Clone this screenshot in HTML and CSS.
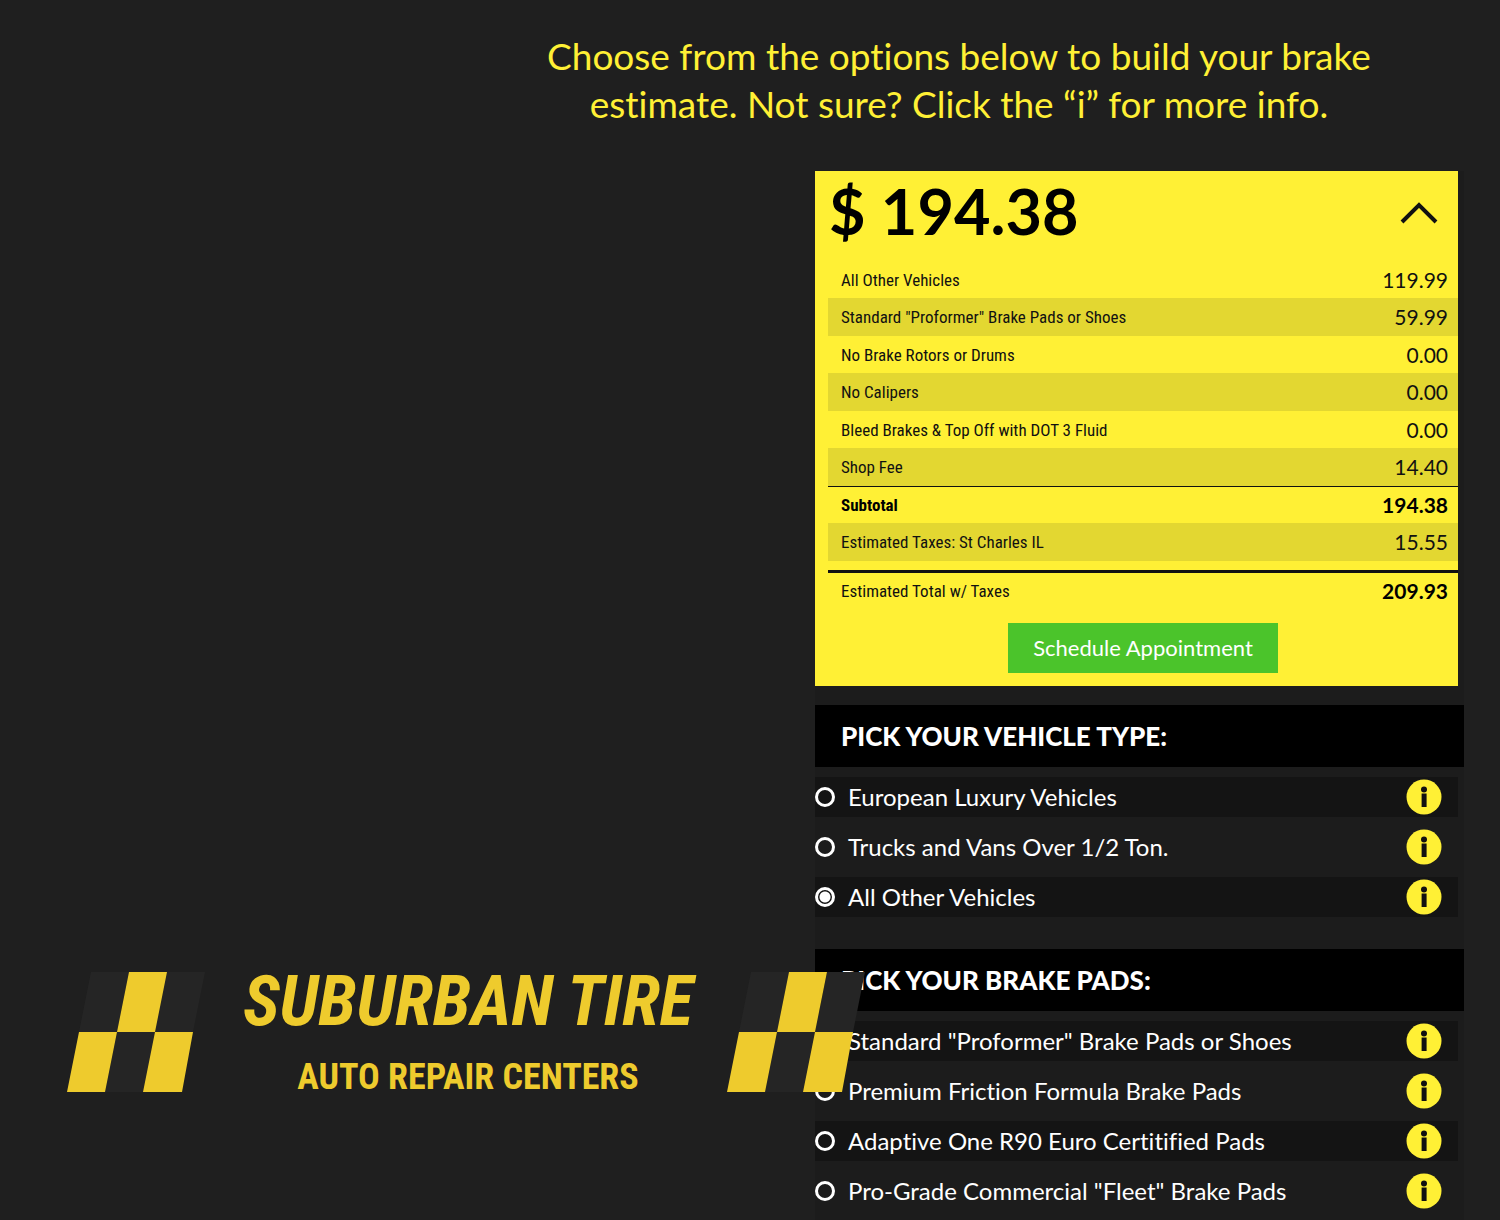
FILE: index.html
```html
<!DOCTYPE html>
<html lang="en">
<head>
<meta charset="utf-8">
<meta name="viewport" content="width=device-width, initial-scale=1">
<title>Brake Estimate | Suburban Tire Auto Repair Centers</title>
<link rel="stylesheet" href="styles.css">
</head>
<body>
<svg class="sprite" aria-hidden="true">
  <symbol id="info" viewBox="0 0 36 36">
    <circle cx="18" cy="18" r="17.5" fill="#fff035"/>
    <circle cx="18" cy="10.500" r="3" fill="#111"/>
    <path d="M15.600 14.500h5v13.500h-5z" fill="#111"/>
  </symbol>
  <symbol id="flag" viewBox="0 0 138 122">
    <path d="M24 1H62L50 61H12ZM100 1H138L126 61H88ZM50 61H88L76 121H38Z" fill="#252525"/>
    <path d="M62 1H100L88 61H50ZM12 61H50L38 121H0ZM88 61H126L115 121H76Z" fill="#eecb2d"/>
  </symbol>
</svg>

<main class="page">
  <h1 class="intro">Choose from the options below to build your brake<br>estimate. Not sure? Click the “i” for more info.</h1>

  <div class="builder">
    <section class="estimate" aria-label="Estimate">
      <header class="estimate-head">
        <output class="price">$ 194.38</output>
        <button class="collapse" type="button" aria-label="Hide details">
          <svg width="38" height="22" viewBox="0 0 38 22"><path d="M2 20L19 3L36 20" fill="none" stroke="#111" stroke-width="4"/></svg>
        </button>
      </header>
      <table class="lines">
        <tbody>
          <tr><th scope="row">All Other Vehicles</th><td>119.99</td></tr>
          <tr><th scope="row">Standard "Proformer" Brake Pads or Shoes</th><td>59.99</td></tr>
          <tr><th scope="row">No Brake Rotors or Drums</th><td>0.00</td></tr>
          <tr><th scope="row">No Calipers</th><td>0.00</td></tr>
          <tr><th scope="row">Bleed Brakes &amp; Top Off with DOT 3 Fluid</th><td>0.00</td></tr>
          <tr><th scope="row">Shop Fee</th><td>14.40</td></tr>
          <tr class="subtotal"><th scope="row">Subtotal</th><td>194.38</td></tr>
          <tr><th scope="row">Estimated Taxes: St Charles IL</th><td>15.55</td></tr>
        </tbody>
      </table>
      <table class="lines total">
        <tbody><tr><th scope="row">Estimated Total w/ Taxes</th><td>209.93</td></tr></tbody>
      </table>
      <button class="schedule" type="button">Schedule Appointment</button>
    </section>

    <fieldset class="group">
      <legend>PICK YOUR VEHICLE TYPE:</legend>
      <div class="options">
        <div class="option"><label><input type="radio" name="vehicle">European Luxury Vehicles</label><button class="info" type="button" aria-label="More info"><svg><use href="#info"/></svg></button></div>
        <div class="option"><label><input type="radio" name="vehicle">Trucks and Vans Over 1/2 Ton.</label><button class="info" type="button" aria-label="More info"><svg><use href="#info"/></svg></button></div>
        <div class="option"><label><input type="radio" name="vehicle" checked>All Other Vehicles</label><button class="info" type="button" aria-label="More info"><svg><use href="#info"/></svg></button></div>
      </div>
    </fieldset>

    <fieldset class="group">
      <legend>PICK YOUR BRAKE PADS:</legend>
      <div class="options">
        <div class="option"><label><input type="radio" name="pads" checked>Standard "Proformer" Brake Pads or Shoes</label><button class="info" type="button" aria-label="More info"><svg><use href="#info"/></svg></button></div>
        <div class="option"><label><input type="radio" name="pads">Premium Friction Formula Brake Pads</label><button class="info" type="button" aria-label="More info"><svg><use href="#info"/></svg></button></div>
        <div class="option"><label><input type="radio" name="pads">Adaptive One R90 Euro Certitified Pads</label><button class="info" type="button" aria-label="More info"><svg><use href="#info"/></svg></button></div>
        <div class="option"><label><input type="radio" name="pads">Pro-Grade Commercial "Fleet" Brake Pads</label><button class="info" type="button" aria-label="More info"><svg><use href="#info"/></svg></button></div>
      </div>
    </fieldset>
  </div>

  <div class="brand">
    <svg class="flag"><use href="#flag"/></svg>
    <div class="brand-text">
      <span class="brand-name">SUBURBAN TIRE</span>
      <span class="brand-tag">AUTO REPAIR CENTERS</span>
    </div>
    <svg class="flag"><use href="#flag"/></svg>
  </div>
</main>
</body>
</html>
```
FILE: styles.css
```css
:root {
  --yellow: #fff035;
  --page: #1f1f1f;
  --sans: Lato, "Open Sans", sans-serif;
  --narrow: "Roboto Condensed", "Liberation Sans Narrow", "DejaVu Sans Condensed", sans-serif;
}

* { box-sizing: border-box; }

body {
  margin: 0;
  background: var(--page);
  color: #fff;
  font-family: var(--sans);
  font-variant-ligatures: none;
}

button {
  margin: 0;
  padding: 0;
  border: 0;
  background: none;
  font: inherit;
  color: inherit;
  cursor: pointer;
}

button svg { display: block; }

.sprite { position: absolute; width: 0; height: 0; }

.page {
  position: relative;
  min-height: 100vh;
  padding: 32px 36px 0 0;
}

.intro {
  margin: 0 0 43px;
  padding-left: 31%;
  color: var(--yellow);
  font-size: 37px;
  font-weight: 400;
  line-height: 48px;
  text-align: center;
}

.builder {
  display: flex;
  flex-direction: column;
  gap: 32px;
  width: 44.33%;
  margin-left: auto;
  padding-bottom: 9px;
  background: #1c1c1c;
}

.estimate {
  display: flex;
  flex-direction: column;
  margin: 0 6px -13px 0;
  padding-bottom: 13px;
  background: var(--yellow);
  color: #111;
}

.estimate-head {
  display: flex;
  align-items: center;
  justify-content: space-between;
  height: 90px;
  padding: 0 20px 6px 14px;
}

.price {
  padding-bottom: 4px;
  font-size: 63px;
  font-weight: 700;
  line-height: 80px;
  color: #000;
}

.lines {
  margin-left: 13px;
  border-collapse: collapse;
  line-height: 24px;
}

.lines th,
.lines td {
  height: 37px;
  padding: 0 10px 0 13px;
  font-weight: 400;
}

.lines th {
  font-family: var(--narrow);
  font-size: 17px;
  text-align: left;
}

.lines td {
  font-size: 21px;
  text-align: right;
}

.lines tr:nth-child(even) { background: #e3d731; }
.lines tr:nth-child(even) :is(th, td) { height: 38px; }

.lines .subtotal { border-top: 1px solid #111; }
.lines .subtotal :is(th, td),
.total td { font-weight: 700; color: #000; }

.total {
  margin-top: 9px;
  border-top: 3px solid #111;
}

.schedule {
  align-self: center;
  margin: 14px 0 0 13px;
  padding: 0 25px;
  background: #4bc42b;
  color: #fff;
  font-size: 22px;
  line-height: 50px;
}

.group {
  min-width: 0;
  margin: 0;
  padding: 0;
  border: 0;
}

.group legend {
  width: 100%;
  margin-bottom: 10px;
  padding: 0 26px;
  background: #000;
  font-size: 26px;
  font-weight: 900;
  line-height: 62px;
}

.options {
  display: grid;
  gap: 10px;
  margin-right: 6px;
}

.option {
  display: flex;
  align-items: center;
  justify-content: space-between;
  height: 40px;
  padding-right: 16px;
}

.option:nth-child(odd) { background: #141414; }

.option label {
  display: flex;
  align-items: center;
  gap: 13px;
  font-size: 24px;
  line-height: 32px;
}

.option input {
  appearance: none;
  width: 20px;
  height: 20px;
  margin: 0;
  border: 3px solid #fff;
  border-radius: 50%;
}

.option input:checked {
  background: radial-gradient(circle, #fff 5px, transparent 6px);
}

.info svg {
  width: 36px;
  height: 36px;
}

/* Brand lockup floats over the estimate builder */
.brand {
  position: absolute;
  left: 67px;
  bottom: 121px;
  display: flex;
  align-items: center;
  gap: 22px;
  width: 798px;
  color: #eecb2d;
}

.flag {
  flex: none;
  width: 138px;
  height: 122px;
}

.brand-text {
  flex: 1;
  display: flex;
  flex-direction: column;
  align-items: center;
  gap: 18px;
  padding-left: 4px;
  font-family: var(--narrow);
  font-weight: 700;
  white-space: nowrap;
}

.brand-name {
  font-size: 70px;
  font-style: italic;
  line-height: 72px;
}

.brand-tag {
  font-size: 36px;
  line-height: 44px;
}
```
